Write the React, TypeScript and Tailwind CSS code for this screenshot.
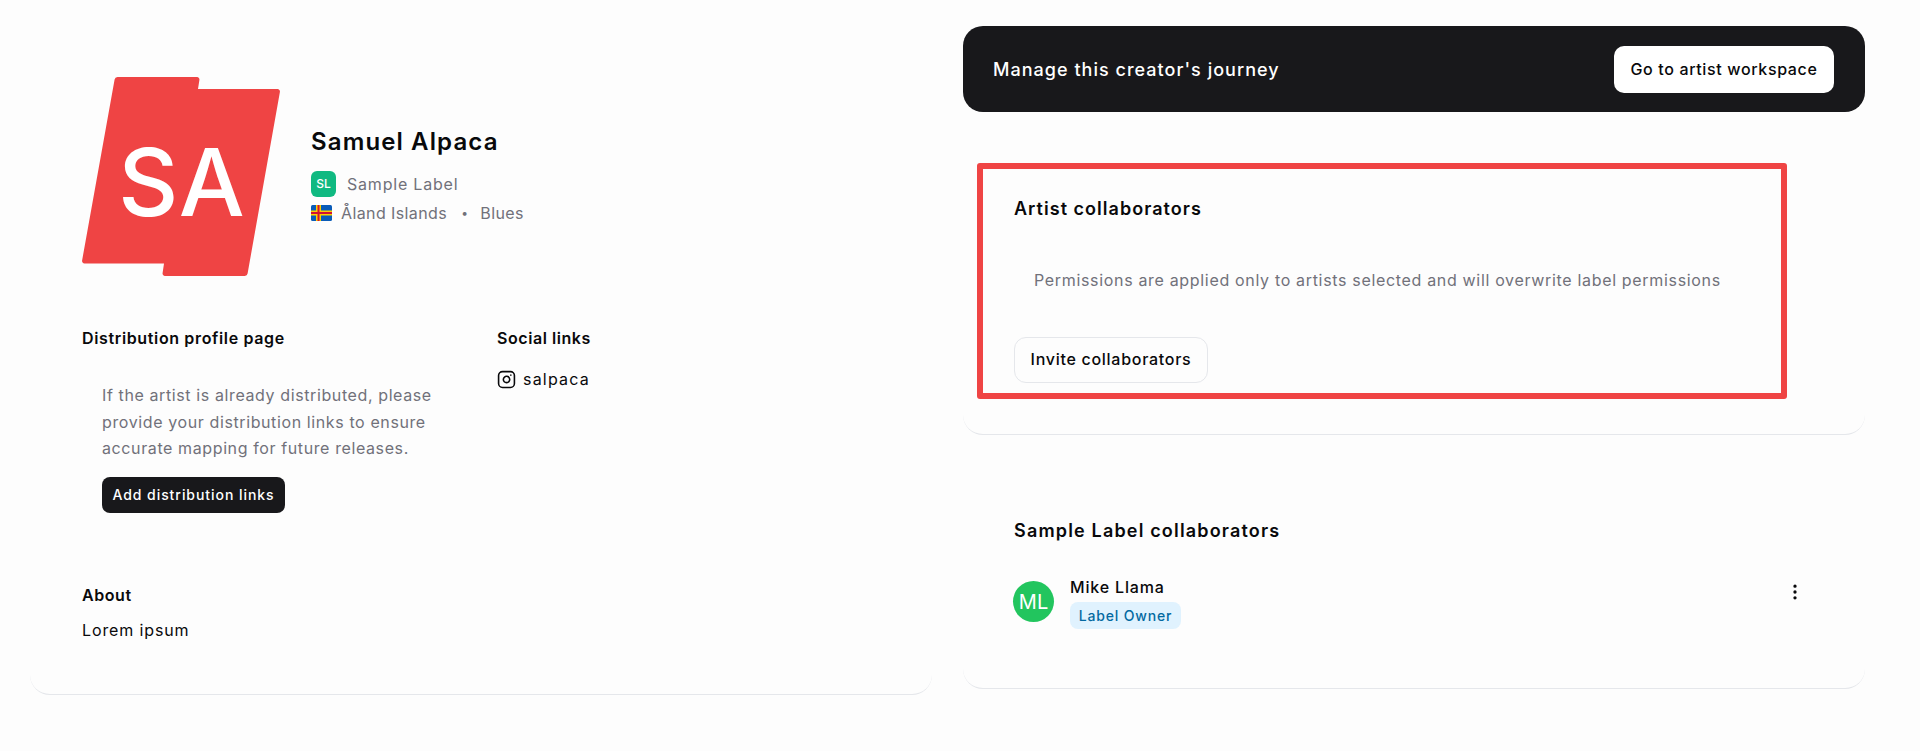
import { Instagram, EllipsisVertical } from "lucide-react";

function Logo() {
  return (
    <div className="relative w-[198px] h-[199px] shrink-0">
      <svg width="198" height="199" viewBox="0 0 198 199" className="block">
        <path
          d="M35.5 0H115a2.5 2.5 0 0 1 2.4 3L116 12H195.5a2.5 2.5 0 0 1 2.4 3L165.6 196.5a3 3 0 0 1-3 2.5H83a2.5 2.5 0 0 1-2.4-3L82 186.5H2.5a2.5 2.5 0 0 1-2.4-3L32.6 2.5a3 3 0 0 1 2.9-2.5Z"
          fill="#ef4444"
        />
      </svg>
      <div className="absolute inset-0 flex items-center justify-center text-white text-[93px] leading-none font-medium tracking-[0.01em] font-['Inter',sans-serif] pl-[2px] pt-[12px]">
        SA
      </div>
    </div>
  );
}

function AlandFlag() {
  return (
    <svg width="21" height="16" viewBox="0 0 21 16" className="block shrink-0">
      <rect width="21" height="16" rx="1.5" fill="#0a5cb8" />
      <rect x="5" width="5" height="16" fill="#ffce00" />
      <rect y="5.5" width="21" height="5" fill="#ffce00" />
      <rect x="6.5" width="2" height="16" fill="#d21034" />
      <rect y="7" width="21" height="2" fill="#d21034" />
    </svg>
  );
}

export default function App() {
  return (
    <div className="min-h-screen bg-[#fdfdfd] font-['Inter',sans-serif] text-[#09090b] pl-[30px] pr-[55px] pt-[26px] flex gap-[31px] items-start">
      <section className="w-[902px] h-[669px] rounded-b-[20px] border-b border-[#e5e7eb] pl-[52px] pt-[51px]">
        <div className="flex items-start gap-[31px]">
          <Logo />
          <div className="flex flex-col pt-[47px]">
            <h1 className="text-[24px] leading-[36px] font-semibold tracking-[0.047em]">Samuel Alpaca</h1>
            <div className="flex items-center mt-[11px] h-[26px]">
              <div className="w-[25px] h-[26px] rounded-[6px] bg-[#10b981] text-white text-[12px] font-medium flex items-center justify-center">
                SL
              </div>
              <span className="ml-[11px] text-[16px] text-[#71717a] tracking-[0.05em]">Sample Label</span>
            </div>
            <div className="flex items-center mt-[4px] h-[24px] text-[16px] text-[#71717a] tracking-[0.025em]">
              <AlandFlag />
              <span className="ml-[9px]">Åland Islands</span>
              <span className="ml-[14px] text-[12px]">•</span>
              <span className="ml-[12px]">Blues</span>
            </div>
          </div>
        </div>

        <div className="flex mt-[50px]">
          <div className="w-[415px]">
            <h2 className="text-[16px] leading-[24px] font-semibold tracking-[0.04em]">Distribution profile page</h2>
            <div className="pl-[20px] mt-[32px]">
              <p className="w-[345px] text-[16px] leading-[26.67px] text-[#71717a] tracking-[0.038em]">
                If the artist is already distributed, please provide your distribution links to ensure accurate mapping for future releases.
              </p>
              <button className="mt-[15px] w-[183px] h-[36px] pb-[2px] rounded-[8px] bg-[#18181b] text-white text-[14px] font-medium tracking-[0.068em] flex items-center justify-center">
                Add distribution links
              </button>
            </div>
          </div>
          <div>
            <h2 className="text-[16px] leading-[24px] font-semibold tracking-[0.035em]">Social links</h2>
            <div className="flex items-center gap-[7px] mt-[17px] text-[16px] leading-[24px] tracking-[0.075em]">
              <Instagram size={19} strokeWidth={2} />
              <span>salpaca</span>
            </div>
          </div>
        </div>

        <h2 className="mt-[70px] text-[16px] leading-[24px] font-semibold tracking-[0.035em]">About</h2>
        <p className="mt-[11px] text-[16px] leading-[24px] tracking-[0.055em]">Lorem ipsum</p>
      </section>

      <div className="w-[902px] flex flex-col">
        <div className="h-[86px] rounded-[20px] bg-[#18181b] flex items-center justify-between pl-[30px] pr-[31px] pt-[1px]">
          <span className="text-white text-[18px] font-medium tracking-[0.057em]">Manage this creator's journey</span>
          <button className="w-[220px] h-[47px] pb-[2px] rounded-[10px] bg-white text-[16px] font-medium text-[#09090b] tracking-[0.04em]">
            Go to artist workspace
          </button>
        </div>

        <section className="mt-[51px] h-[272px] rounded-b-[20px] border-b border-[#e5e7eb] pl-[14px]">
          <div className="w-[810px] h-[236px] border-[6px] border-[#ef4444] rounded-[3px] pl-[31px] pt-[26px]">
            <h2 className="text-[18px] leading-[28px] font-semibold tracking-[0.057em]">Artist collaborators</h2>
            <p className="mt-[45px] pl-[20px] text-[16px] leading-[24px] text-[#71717a] tracking-[0.042em]">
              Permissions are applied only to artists selected and will overwrite label permissions
            </p>
            <button className="mt-[45px] w-[194px] h-[46px] pb-[2px] rounded-[12px] border border-[#e5e7eb] text-[16px] font-medium tracking-[0.045em]">
              Invite collaborators
            </button>
          </div>
        </section>

        <section className="h-[254px] rounded-b-[20px] border-b border-[#e5e7eb] pl-[50px] pr-[60px] pt-[82px]">
          <h2 className="text-[18px] leading-[28px] font-semibold tracking-[0.065em] pl-[1px]">Sample Label collaborators</h2>
          <div className="flex items-start mt-[30px]">
            <div className="mt-[6px] w-[41px] h-[41px] rounded-full bg-[#22c55e] text-white text-[20px] flex items-center justify-center">
              ML
            </div>
            <div className="ml-[16px] flex flex-col items-start flex-1">
              <span className="text-[16px] leading-[24px] font-medium tracking-[0.052em]">Mike Llama</span>
              <span className="mt-[3px] h-[27px] w-[111px] rounded-[8px] bg-[#e0f2fe] text-[#0369a1] text-[14px] font-medium tracking-[0.06em] flex items-center justify-center">
                Label Owner
              </span>
            </div>
            <EllipsisVertical size={20} strokeWidth={2} className="mt-[7px]" />
          </div>
        </section>
      </div>
    </div>
  );
}
